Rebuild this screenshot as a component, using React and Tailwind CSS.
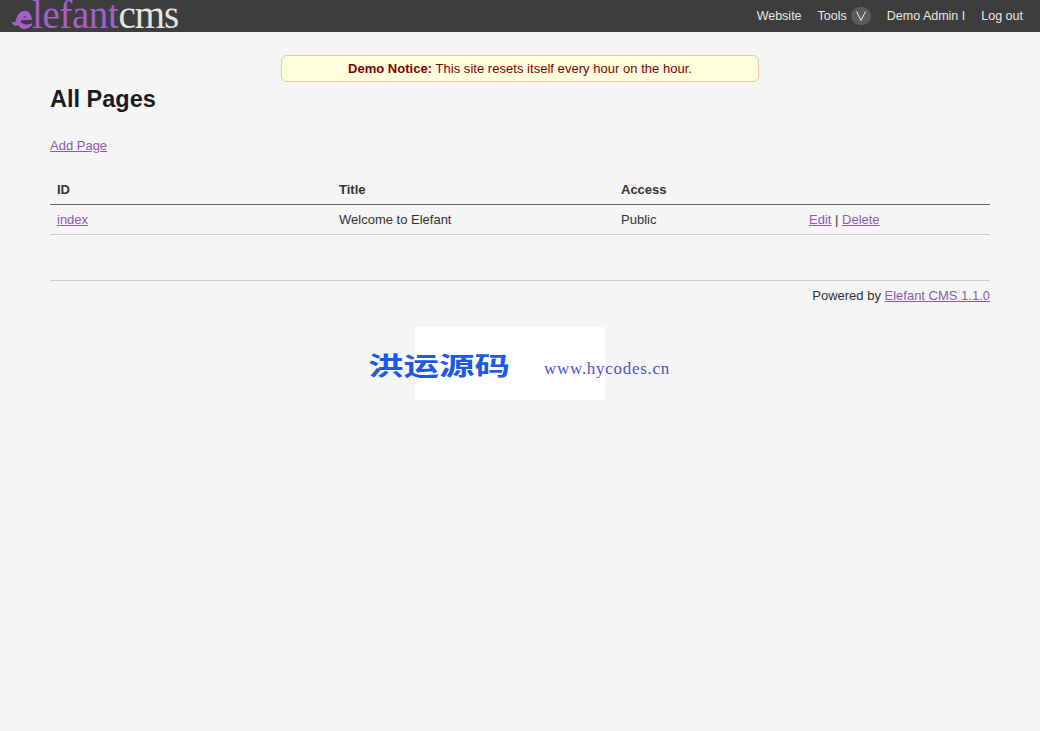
const LINK = "text-[#8e5cab] underline";

function Logo() {
  return (
    <div className="flex h-8 items-center pl-[11px]">
      <svg width="21" height="20" viewBox="0 0 63 60" className="mt-[8px] shrink-0">
        <path d="M15 33C16 14 30 2 43 2c11 0 19 12 20 27L30 31c-1 1-1 3 0 5 8 10 22 9 33 4v6C50 60 30 61 22 46c-6 3-16 3-21-11 5 3 10 3 14-2z" fill="#a65fc8" />
        <path d="M36 21c3-3 8-3 11 0-3 2-8 2-11 0z" fill="#3d3d3d" />
      </svg>
      <span className="pb-[2px] font-['Liberation_Serif',serif] text-[39px] leading-[30px] tracking-[-0.4px] text-[#a65fc8]">lefant</span>
      <span className="pb-[2px] font-['Liberation_Serif',serif] text-[39px] leading-[30px] tracking-[-1px] text-[#e4e4e4]">cms</span>
    </div>
  );
}

export default function App() {
  return (
    <div className="relative min-h-[731px] bg-[#f5f5f5] font-['Liberation_Sans',Arial,sans-serif] text-[13px] text-[#333]">
      <header className="flex h-8 items-center justify-between bg-[#3d3d3d]">
        <Logo />
        <nav className="flex items-center gap-4 pr-[17px] text-[12.5px] text-[#e8e8e8]">
          <a>Website</a>
          <a className="flex items-center gap-1">
            Tools
            <span className="flex h-[18px] w-5 items-center justify-center rounded-[9px] bg-[#5c5c5c]">
              <svg width="12" height="10" viewBox="0 0 12 10" fill="none" stroke="#e8e8e8" strokeWidth="1">
                <path d="M1.500 .5 6 9.500 10.500 .5" />
              </svg>
            </span>
          </a>
          <a>Demo Admin I</a>
          <a>Log out</a>
        </nav>
      </header>

      <div className="mx-auto mt-[23px] flex h-[27px] w-[478px] items-center justify-center rounded-md border border-[#e6c9a0] bg-[#ffffdd] tracking-[0.03px] text-[#800000]">
        <p><strong>Demo Notice:</strong> This site resets itself every hour on the hour.</p>
      </div>

      <main className="px-[50px]">
        <h1 className="mt-[3px] text-[23.5px] leading-7 font-bold text-[#1c1c1c]">All Pages</h1>
        <p className="mt-[23px] leading-5"><a className={LINK}>Add Page</a></p>

        <table className="mt-[19px] w-full table-fixed border-collapse">
          <thead>
            <tr className="h-[29px] border-b border-[#666] text-left">
              <th className="w-[30%] px-[7px] font-bold">ID</th>
              <th className="w-[30%] px-[7px] font-bold">Title</th>
              <th className="w-[20%] px-[7px] font-bold">Access</th>
              <th className="w-[20%] px-[7px]"></th>
            </tr>
          </thead>
          <tbody>
            <tr className="h-[30px] border-b border-[#ccc]">
              <td className="px-[7px] pt-[1px]"><a className={LINK}>index</a></td>
              <td className="px-[7px] pt-[1px]">Welcome to Elefant</td>
              <td className="px-[7px] pt-[1px]">Public</td>
              <td className="px-[7px] pt-[1px]"><a className={LINK}>Edit</a> | <a className={LINK}>Delete</a></td>
            </tr>
          </tbody>
        </table>

        <footer className="mt-[45px] border-t border-[#ccc] pt-[5px] text-right leading-5">
          Powered by <a className={LINK}>Elefant CMS 1.1.0</a>
        </footer>
      </main>

      {/* watermark sits over the page */}
      <div className="absolute top-[327px] left-[415px] h-[73px] w-[190px] bg-white"></div>
      <span className="absolute top-[344px] left-[368px] font-['Noto_Sans_CJK_SC',sans-serif] text-[35.5px] leading-10 font-bold whitespace-nowrap text-[#1a5ae6] [transform:scaleY(0.72)]">洪运源码</span>
      <span className="absolute top-[359px] left-[544px] font-['Liberation_Serif',serif] text-[17px] leading-5 tracking-[0.72px] whitespace-nowrap text-[#4a55cc]">www.hycodes.cn</span>
    </div>
  );
}
